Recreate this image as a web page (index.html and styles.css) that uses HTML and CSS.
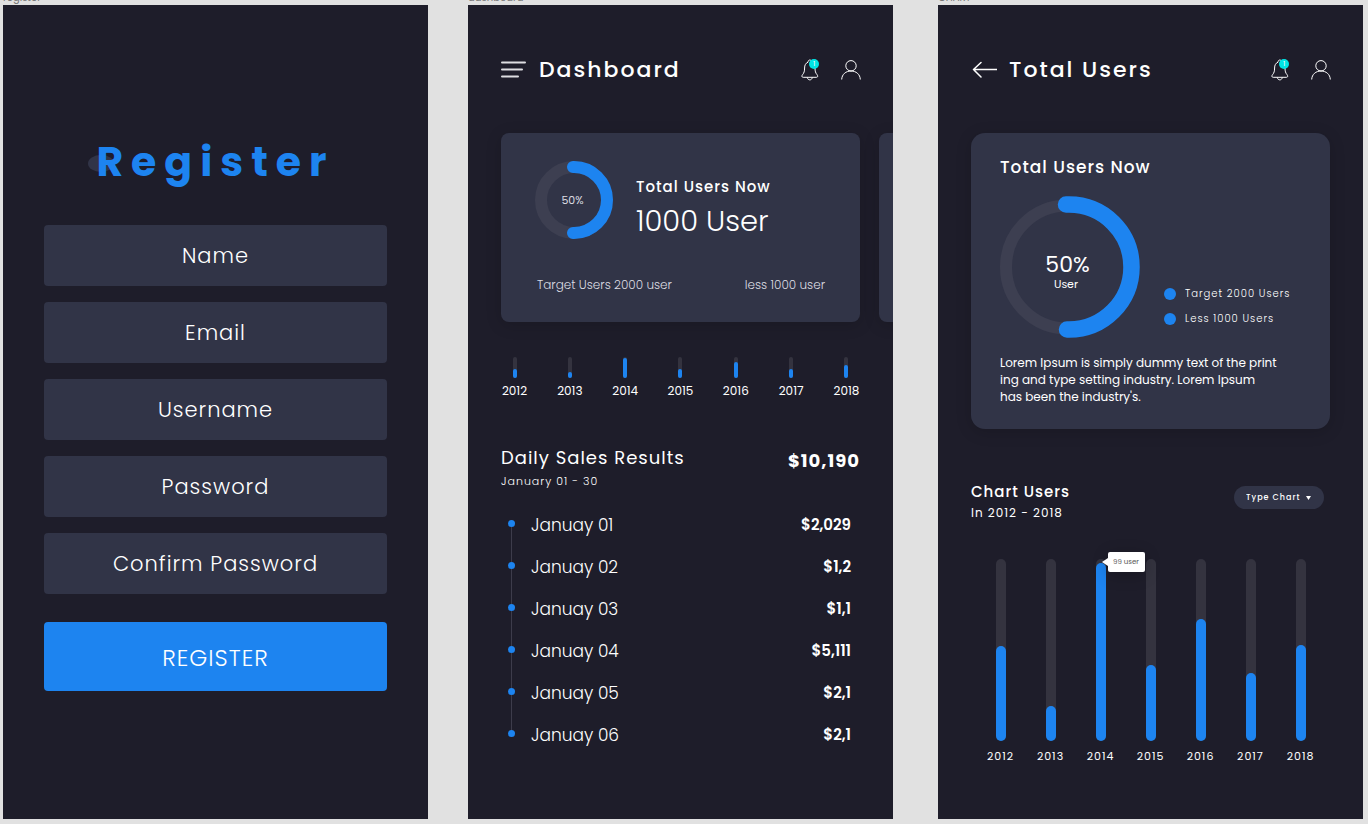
FILE: index.html
```html
<!DOCTYPE html>
<html lang="en">
<head>
<meta charset="utf-8">
<meta name="viewport" content="width=device-width, initial-scale=1">
<title>Dashboard screens</title>
<link rel="stylesheet" href="styles.css">
</head>
<body>
<svg class="sprite" aria-hidden="true">
  <symbol id="bell" viewBox="0 0 20 22">
    <path d="M8 3.200C8 2 8.700 1 9.800 1s1.800 1 1.800 2.200C14 4.200 15 6.200 15 9c0 3.200.6 5 2 6.600 1 1.200 1 2.700-.6 2.700H3.200c-1.600 0-1.600-1.500-.6-2.700 1.400-1.600 2-3.400 2-6.600 0-2.800 1-4.800 3.400-5.800zM7.300 18.500c.3 1.500 1.300 2.400 2.500 2.400s2.200-.9 2.500-2.400"/>
  </symbol>
  <symbol id="person" viewBox="0 0 20 20">
    <circle cx="10" cy="5.800" r="5.200"/>
    <path d="M.7 19.500C.9 14.300 4.900 11 10 11s9.100 3.300 9.300 8.500"/>
  </symbol>
</svg>

<main class="canvas">
  <section class="artboard">
    <p class="artboard-label">register</p>
    <div class="screen screen-register">
      <h1 class="register-title">Register</h1>
      <form class="register-form">
        <input class="field" type="text" placeholder="Name" aria-label="Name">
        <input class="field" type="email" placeholder="Email" aria-label="Email">
        <input class="field" type="text" placeholder="Username" aria-label="Username">
        <input class="field" type="password" placeholder="Password" aria-label="Password">
        <input class="field" type="password" placeholder="Confirm Password" aria-label="Confirm Password">
        <button class="submit" type="submit">REGISTER</button>
      </form>
    </div>
  </section>

  <section class="artboard">
    <p class="artboard-label">dashboard</p>
    <div class="screen">
      <header class="topbar">
        <button class="icon-button" type="button" aria-label="Menu">
          <svg class="nav-icon" width="26" height="20" viewBox="0 0 26 20"><path class="menu-lines" d="M1 2.500h23M1 9.500h20M1 16.500h16"/></svg>
        </button>
        <h1 class="topbar-title">Dashboard</h1>
        <button class="icon-button bell" type="button" aria-label="Notifications">
          <svg class="line-icon" width="20" height="22"><use href="#bell"/></svg>
          <span class="badge">1</span>
        </button>
        <button class="icon-button" type="button" aria-label="Profile">
          <svg class="line-icon" width="20" height="20"><use href="#person"/></svg>
        </button>
      </header>

      <div class="carousel">
        <article class="card summary">
          <div class="summary-main">
            <div class="donut">
              <svg width="80" height="80" viewBox="0 0 80 80">
                <circle class="track" cx="40" cy="40" r="33" stroke-width="12"/>
                <path class="arc" stroke-width="12" d="M39 7h1a33 33 0 0 1 0 66h-1"/>
              </svg>
              <span class="donut-text">50%</span>
            </div>
            <div>
              <h2 class="summary-title">Total Users Now</h2>
              <p class="summary-value">1000 User</p>
            </div>
          </div>
          <div class="summary-foot"><span>Target Users 2000 user</span><span>less 1000 user</span></div>
        </article>
        <article class="card card-next"></article>
      </div>

      <div class="mini-chart">
        <div class="col"><div class="bar"><i style="height:45%"></i></div>2012</div>
        <div class="col"><div class="bar"><i style="height:28%"></i></div>2013</div>
        <div class="col"><div class="bar"><i style="height:95%"></i></div>2014</div>
        <div class="col"><div class="bar"><i style="height:45%"></i></div>2015</div>
        <div class="col"><div class="bar"><i style="height:78%"></i></div>2016</div>
        <div class="col"><div class="bar"><i style="height:45%"></i></div>2017</div>
        <div class="col"><div class="bar"><i style="height:62%"></i></div>2018</div>
      </div>

      <div class="sales-head">
        <div>
          <h2 class="section-title">Daily Sales Results</h2>
          <p class="sales-range">January 01 - 30</p>
        </div>
        <strong class="sales-total">$10,190</strong>
      </div>
      <ol class="timeline">
        <li><span>Januay 01</span><b>$2,029</b></li>
        <li><span>Januay 02</span><b>$1,2</b></li>
        <li><span>Januay 03</span><b>$1,1</b></li>
        <li><span>Januay 04</span><b>$5,111</b></li>
        <li><span>Januay 05</span><b>$2,1</b></li>
        <li><span>Januay 06</span><b>$2,1</b></li>
      </ol>
    </div>
  </section>

  <section class="artboard">
    <p class="artboard-label">CHART</p>
    <div class="screen">
      <header class="topbar">
        <button class="icon-button" type="button" aria-label="Back">
          <svg class="nav-icon" width="26" height="20" viewBox="0 0 26 20"><path class="back-arrow" d="M26 9.500H2.500M10 2.500l-7.500 7 7.500 7.500"/></svg>
        </button>
        <h1 class="topbar-title">Total Users</h1>
        <button class="icon-button bell" type="button" aria-label="Notifications">
          <svg class="line-icon" width="20" height="22"><use href="#bell"/></svg>
          <span class="badge">1</span>
        </button>
        <button class="icon-button" type="button" aria-label="Profile">
          <svg class="line-icon" width="20" height="20"><use href="#person"/></svg>
        </button>
      </header>

      <article class="card detail">
        <h2 class="section-title detail-title">Total Users Now</h2>
        <div class="detail-body">
          <div class="donut">
            <svg width="140" height="142" viewBox="0 0 140 142">
              <circle class="track" cx="67.500" cy="71" r="61.500" stroke-width="12"/>
              <path class="arc" stroke-width="16.500" d="M66 8.500h3a62.500 62.500 0 0 1 0 125h-2"/>
            </svg>
            <span class="donut-text donut-text-large">50%<small>User</small></span>
          </div>
          <ul class="legend">
            <li>Target 2000 Users</li>
            <li>Less 1000 Users</li>
          </ul>
        </div>
        <p class="detail-text">Lorem Ipsum is simply dummy text of the print<br>ing and type setting industry. Lorem Ipsum<br>has been the industry's.</p>
      </article>

      <div class="chart-head">
        <div>
          <h2 class="chart-title">Chart Users</h2>
          <p class="chart-range">In 2012 - 2018</p>
        </div>
        <div class="select-wrap">
          <select class="select" aria-label="Type Chart"><option>Type Chart</option></select>
          <svg class="caret" width="5" height="4" viewBox="0 0 5 4"><path d="M0 0h5L2.500 4z"/></svg>
        </div>
      </div>

      <div class="chart">
        <div class="col"><div class="bar"><i style="height:52%"></i></div>2012</div>
        <div class="col"><div class="bar"><i style="height:19%"></i></div>2013</div>
        <div class="col"><div class="bar"><i style="height:98%"></i><span class="tooltip">99 user</span></div>2014</div>
        <div class="col"><div class="bar"><i style="height:41.500%"></i></div>2015</div>
        <div class="col"><div class="bar"><i style="height:67%"></i></div>2016</div>
        <div class="col"><div class="bar"><i style="height:37.300%"></i></div>2017</div>
        <div class="col"><div class="bar"><i style="height:52.700%"></i></div>2018</div>
      </div>
    </div>
  </section>
</main>
</body>
</html>
```
FILE: styles.css
```css
:root {
  --canvas: #e1e1e1;
  --screen: #1e1d2a;
  --card: #313447;
  --blue: #1d84f0;
  --track: #3d3f51;
}

* { box-sizing: border-box; }

body, h1, h2, p, ol, ul { margin: 0; padding: 0; }

body {
  background: var(--canvas);
  color: #fff;
  font-family: Poppins, Inter, "Liberation Sans", sans-serif;
  font-size: 11px;
  line-height: 16px;
}

h1, h2 { font-weight: 500; }
ol, ul { list-style: none; }
button, input, select { font: inherit; color: inherit; border: 0; }
svg { display: block; }
.sprite { position: absolute; width: 0; height: 0; }

.canvas {
  display: grid;
  grid-template-columns: minmax(0, 1fr) 40px minmax(0, 1fr) 45px minmax(0, 1fr);
  min-height: 100vh;
  padding: 0 5px 5px 3px;
  overflow: hidden;
}

.artboard { display: flex; flex-direction: column; }
.artboard:nth-child(2) { grid-column: 3; }
.artboard:nth-child(3) { grid-column: 5; }

.artboard-label {
  margin-top: -9px;
  color: #777;
  font-size: 10px;
  line-height: 14px;
}

.screen {
  flex: 1;
  padding: 49px 33px 0;
  background: var(--screen);
  overflow: hidden;
}

/* Register */
.screen-register { padding: 127px 41px 0; }

.register-title {
  position: relative;
  z-index: 0;
  color: var(--blue);
  font-size: 41px;
  font-weight: 700;
  line-height: 60px;
  letter-spacing: 8px;
  text-align: center;
}

.register-title::before {
  content: "";
  position: absolute;
  z-index: -1;
  left: 44px;
  top: 23px;
  width: 26px;
  height: 17px;
  border-radius: 50%;
  background: var(--card);
}

.register-form { display: grid; gap: 16px; margin-top: 33px; }

.field {
  width: 100%;
  height: 61px;
  padding: 0 16px;
  border-radius: 4px;
  background: var(--card);
  font-size: 21px;
  font-weight: 300;
  letter-spacing: 1px;
  text-align: center;
}

.field::placeholder { color: #fff; opacity: 1; }

.submit {
  height: 69px;
  margin-top: 12px;
  padding-top: 4px;
  border-radius: 4px;
  background: var(--blue);
  font-size: 23px;
  font-weight: 300;
  letter-spacing: 1px;
}

/* Top bar */
.topbar { display: flex; align-items: center; height: 32px; margin-right: -1px; }

.topbar-title {
  flex: 1;
  margin-left: 12px;
  font-size: 22px;
  line-height: 32px;
  letter-spacing: 2px;
}

.icon-button { position: relative; padding: 0; background: none; }
.bell { margin-right: 21px; }
.nav-icon, .line-icon { fill: none; stroke: #fff; }
.menu-lines { stroke-width: 2; stroke: #dddde1; stroke-linecap: round; }
.back-arrow { stroke-width: 1.5; stroke-linecap: round; stroke-linejoin: round; }

.badge {
  position: absolute;
  top: 0;
  left: 9px;
  width: 10px;
  height: 10px;
  border-radius: 50%;
  background: #00e5e5;
  font-size: 7px;
  line-height: 10px;
  text-align: center;
}

/* Cards */
.card {
  border-radius: 8px;
  background: var(--card);
  box-shadow: 0 3px 16px rgb(0 0 0 / 16%);
}

.carousel { display: flex; gap: 19px; margin-top: 47px; }
.summary { flex: 0 0 100%; padding: 27px 33px 29px; }
.card-next { flex: 0 0 100%; }
.summary-main { display: flex; align-items: flex-end; gap: 22px; }
.summary-title { font-size: 15px; line-height: 20px; letter-spacing: 1px; }
.summary-value { font-size: 29px; font-weight: 300; line-height: 38px; margin-top: 5px; }

.summary-foot {
  display: flex;
  justify-content: space-between;
  margin-top: 37px;
  padding: 0 2px 0 3px;
  color: #dcdce2;
  font-size: 12px;
  font-weight: 300;
}

.donut { position: relative; flex: none; }
.donut svg { fill: none; }
.track { stroke: var(--track); }
.arc { stroke: var(--blue); stroke-linecap: round; }

.donut-text {
  position: absolute;
  inset: 0;
  display: flex;
  flex-direction: column;
  align-items: center;
  justify-content: center;
  padding-right: 3px;
  color: #dcdce2;
}

.donut-text-large {
  padding: 11px 5px 0 0;
  color: #fff;
  font-size: 22px;
  line-height: 22px;
}

.donut-text-large small { padding-right: 3px; font-size: 11px; line-height: 16px; }

/* Bars */
.mini-chart, .chart { display: flex; justify-content: space-between; }

.col {
  display: flex;
  flex-direction: column;
  align-items: center;
  width: 27px;
  white-space: nowrap;
}

.bar {
  position: relative;
  display: flex;
  align-items: flex-end;
  width: 4px;
  height: 21px;
  border-radius: 5px;
  background: #34333f;
}

.bar i { width: 100%; border-radius: 5px; background: var(--blue); }
.mini-chart { margin-top: 35px; font-size: 12px; }
.mini-chart .bar { margin-bottom: 5px; }

/* Daily sales */
.sales-head { display: flex; justify-content: space-between; margin-top: 47px; }
.section-title { font-size: 18px; font-weight: 400; line-height: 24px; letter-spacing: 1px; }
.sales-range { margin-top: 3px; font-weight: 300; letter-spacing: 1px; }
.sales-total { margin-top: 3px; font-size: 18px; line-height: 24px; letter-spacing: 1px; }
.timeline { margin-top: 15px; padding: 0 9px 0 7px; }

.timeline li {
  position: relative;
  display: flex;
  justify-content: space-between;
  padding-left: 23px;
  font-size: 17px;
  font-weight: 300;
  line-height: 42px;
}

.timeline b { font-size: 15px; font-weight: 600; }

.timeline li::before {
  content: "";
  position: absolute;
  left: 0;
  top: 16px;
  width: 7px;
  height: 7px;
  border-radius: 50%;
  background: var(--blue);
}

.timeline li:not(:last-child)::after {
  content: "";
  position: absolute;
  left: 3px;
  top: 23px;
  width: 1px;
  height: 35px;
  background: #3d3c4b;
}

/* Total users */
.detail { margin-top: 47px; padding: 22px 29px 24px; border-radius: 14px; }
.detail-title { font-size: 17px; font-weight: 500; }
.detail-body { display: flex; align-items: flex-end; gap: 24px; margin-top: 17px; }
.legend { display: grid; gap: 9px; padding-bottom: 11px; }

.legend li {
  display: flex;
  align-items: center;
  gap: 9px;
  font-size: 10px;
  font-weight: 300;
  letter-spacing: 1px;
  white-space: nowrap;
}

.legend li::before {
  content: "";
  width: 12px;
  height: 12px;
  border-radius: 50%;
  background: var(--blue);
}

.detail-text { margin-top: 16px; font-size: 12px; line-height: 17px; }

.chart-head { display: flex; justify-content: space-between; margin-top: 51px; padding-right: 6px; }
.chart-title { font-size: 15px; line-height: 24px; letter-spacing: 1px; }
.chart-range { margin-top: 1px; font-size: 12px; letter-spacing: 1px; }
.select-wrap { position: relative; margin-top: 6px; }

.select {
  appearance: none;
  height: 23px;
  padding: 0 23px 0 12px;
  border-radius: 12px;
  background: var(--card);
  font-size: 8px;
  font-weight: 500;
  letter-spacing: 1px;
}

.caret { position: absolute; right: 13px; top: 10px; fill: #fff; pointer-events: none; }

.chart { margin-top: 38px; padding: 0 16px; letter-spacing: 1px; }
.chart .bar { width: 10px; height: 182px; margin-bottom: 7px; }

.tooltip {
  position: absolute;
  z-index: 1;
  left: 12px;
  top: -7px;
  width: 37px;
  border-radius: 2px;
  background: #fff;
  box-shadow: 0 3px 16px rgb(0 0 0 / 24%);
  color: #555;
  font-size: 7px;
  line-height: 20px;
  letter-spacing: 0;
  text-align: center;
}

.tooltip::before {
  content: "";
  position: absolute;
  left: -6px;
  top: 6px;
  border: solid transparent;
  border-width: 4px 6px 4px 0;
  border-right-color: #fff;
}
```
